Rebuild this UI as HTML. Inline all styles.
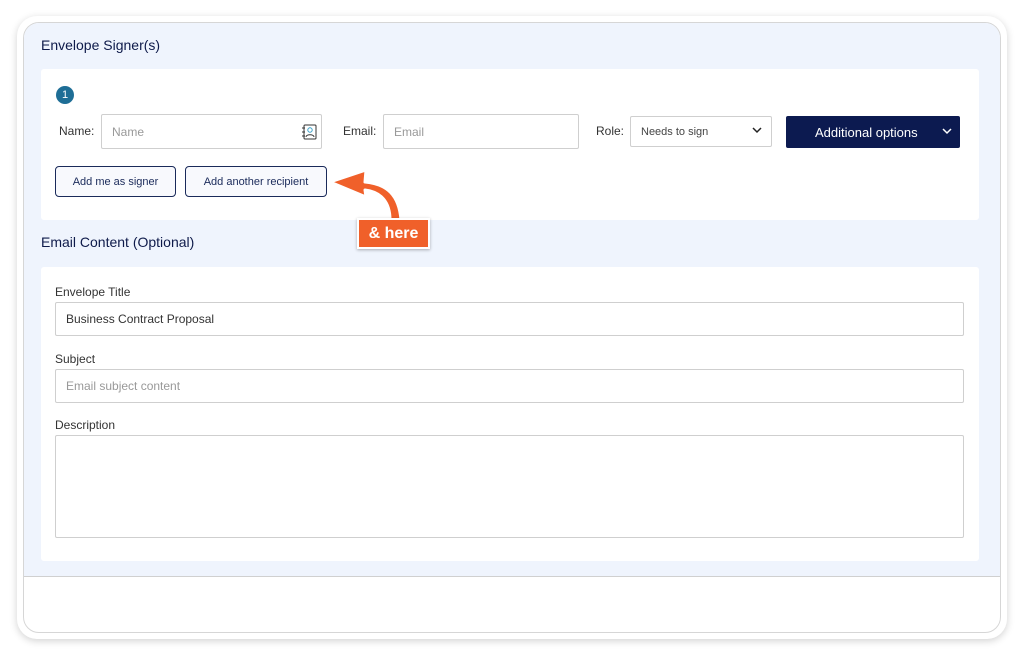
<!DOCTYPE html>
<html><head><style>
*{box-sizing:border-box;margin:0;padding:0}
body{width:1024px;height:654px;background:#fff;font-family:"Liberation Sans",sans-serif;position:relative;overflow:hidden}
.outer{position:absolute;left:17px;top:16px;width:990px;height:623px;border-radius:20px;background:#fff;box-shadow:0 2px 8px rgba(0,0,0,.18)}
.inner{position:absolute;left:23px;top:22px;width:978px;height:611px;border-radius:16px;border:1px solid #d6d6d6;overflow:hidden;background:#fff}
.blue{position:absolute;left:0;top:0;width:100%;height:554px;background:#eff4fd;border-bottom:1px solid #d0d0d0}
.h{position:absolute;color:#0e1a4a;font-size:14px}
.card{position:absolute;background:#fff;border-radius:3px}
.lbl{position:absolute;font-size:12px;color:#333}
.inp{position:absolute;border:1px solid #cfcfcf;border-radius:2px;background:#fff;font-size:12px;color:#999;padding-left:10px;display:flex;align-items:center}
.btn{position:absolute;border:1px solid #1a2a5a;border-radius:4px;background:#f8f9fd;font-size:11px;color:#1a2a5a;display:flex;align-items:center;justify-content:center}
</style></head><body>
<div class="outer"></div>
<div class="inner">
<div class="blue"></div>
<div class="h" style="left:17px;top:14px">Envelope Signer(s)</div>
<div class="card" style="left:17px;top:46px;width:938px;height:151px"></div>
<div style="position:absolute;left:32px;top:63px;width:18px;height:18px;border-radius:50%;background:#1e6e96;color:#fff;font-size:11px;text-align:center;line-height:18px">1</div>
<div class="h" style="left:17px;top:211px">Email Content (Optional)</div>
<div class="card" style="left:17px;top:244px;width:938px;height:294px"></div>
</div>
<div class="lbl" style="left:59px;top:124px">Name:</div>
<div class="inp" style="left:101px;top:114px;width:221px;height:35px">Name
<svg style="position:absolute;right:3px;top:8px" width="18" height="18" viewBox="0 0 18 18" fill="none" stroke="#333" stroke-width="1"><rect x="4" y="2" width="12" height="14" rx="1"/><path d="M2 5h3M2 9h3M2 13h3"/><circle cx="10" cy="7" r="2.2" stroke="#3aa0c8"/><path d="M6 14c0-3 8-3 8 0"/></svg></div>
<div class="lbl" style="left:343px;top:124px">Email:</div>
<div class="inp" style="left:383px;top:114px;width:196px;height:35px">Email</div>
<div class="lbl" style="left:596px;top:124px">Role:</div>
<div class="inp" style="left:630px;top:116px;width:142px;height:31px;font-size:11px;color:#444">Needs to sign</div>
<div style="position:absolute;left:786px;top:116px;width:174px;height:32px;background:#0c1a50;border-radius:2px;color:#fff;font-size:13px;display:flex;align-items:center;padding-left:29px">Additional options
<svg style="position:absolute;right:8px;top:12px" width="10" height="7" viewBox="0 0 10 7" fill="none" stroke="#fff" stroke-width="1.5"><path d="M1 1l4 4 4-4"/></svg></div>
<svg style="position:absolute;left:752px;top:127px" width="10" height="7" viewBox="0 0 10 7" fill="none" stroke="#222" stroke-width="1.5"><path d="M1 1l4 4 4-4"/></svg>
<div class="btn" style="left:55px;top:166px;width:121px;height:31px">Add me as signer</div>
<div class="btn" style="left:185px;top:166px;width:142px;height:31px">Add another recipient</div>
<svg style="position:absolute;left:325px;top:162px" width="90" height="62" viewBox="0 0 90 62">
<path d="M76 58 C74 33 62 22 40 20 L41 8 L5 20 L41 35 L40 28 C56 30 65 40 65 58 Z" fill="#f0602a" stroke="#fff" stroke-width="3" stroke-linejoin="round"/></svg>
<div style="position:absolute;left:357px;top:218px;width:73px;height:31px;background:#f0602a;border:2px solid #fff;box-shadow:0 1px 3px rgba(0,0,0,.3);color:#fff;font-size:16px;font-weight:bold;display:flex;align-items:center;justify-content:center">&amp; here</div>
<div class="lbl" style="left:55px;top:285px">Envelope Title</div>
<div class="inp" style="left:55px;top:302px;width:909px;height:34px;color:#333;font-size:12px">Business Contract Proposal</div>
<div class="lbl" style="left:55px;top:352px">Subject</div>
<div class="inp" style="left:55px;top:369px;width:909px;height:34px">Email subject content</div>
<div class="lbl" style="left:55px;top:418px">Description</div>
<div class="inp" style="left:55px;top:435px;width:909px;height:103px"></div>
</body></html>
